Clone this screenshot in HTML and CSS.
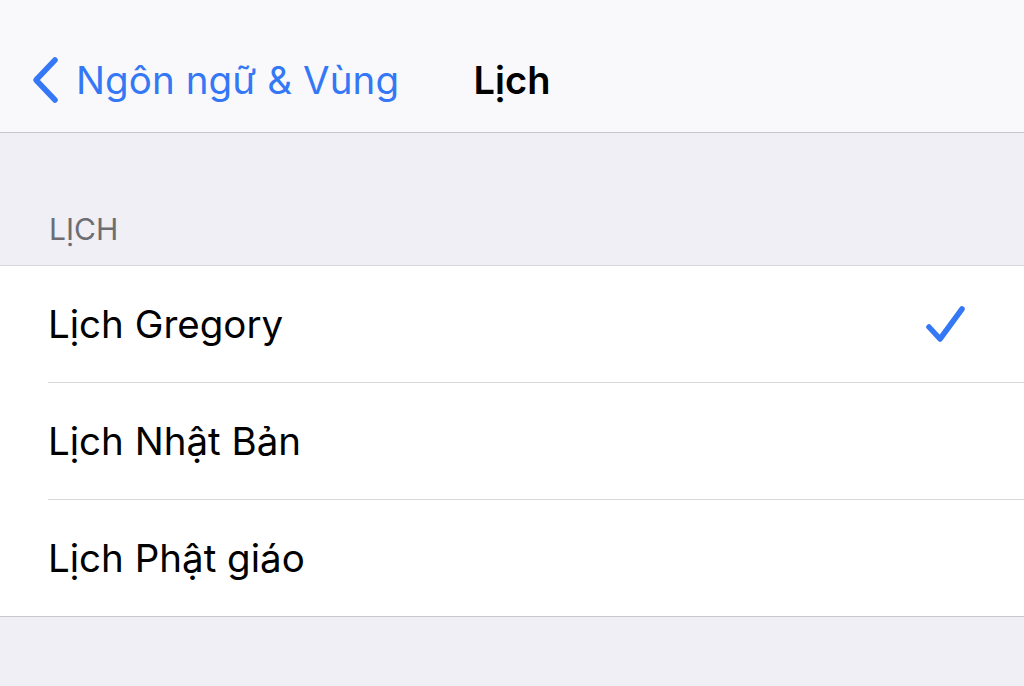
FILE: index.html
```html
<!DOCTYPE html>
<html lang="vi">
<head>
    <meta charset="UTF-8">
    <title>Lịch</title>
    <link rel="stylesheet" href="styles.css">
</head>
<body>
    <!-- Navigation bar -->
    <div class="navbar">
        <a class="back">
            <svg class="chevron" width="28" height="48" viewBox="0 0 28 48">
                <path d="M24 4 L5 24 L24 44" fill="none" stroke="#3478f6" stroke-width="5.5" stroke-linecap="round" stroke-linejoin="round"/>
            </svg>
            <span>Ngôn ngữ &amp; Vùng</span>
        </a>
        <div class="title">Lịch</div>
        <div></div>
    </div>

    <!-- Calendar group -->
    <div class="group-header">LỊCH</div>
    <div class="group">
        <div class="row">
            <div class="row-inner">
                <span>Lịch Gregory</span>
                <svg class="check" width="44" height="42" viewBox="0 0 44 42">
                    <path d="M5 24 L16 36 L38 6" fill="none" stroke="#3478f6" stroke-width="5.5" stroke-linecap="round" stroke-linejoin="round"/>
                </svg>
            </div>
        </div>
        <div class="row">
            <div class="row-inner"><span>Lịch Nhật Bản</span></div>
        </div>
        <div class="row">
            <div class="row-inner"><span>Lịch Phật giáo</span></div>
        </div>
    </div>
</body>
</html>
```

FILE: styles.css
```css
body {
    margin: 0;
    font-family: 'Inter', 'Noto Sans', sans-serif;
    background-color: #f0eff5;
    height: 686px;
    overflow: hidden;
}

.navbar {
    height: 133px;
    box-sizing: border-box;
    padding-top: 27px;
    background-color: #f9f9fb;
    border-bottom: 1px solid #c8c7cc;
    display: grid;
    grid-template-columns: 1fr auto 1fr;
    align-items: center;
}

.back {
    display: flex;
    align-items: center;
    gap: 17px;
    padding-left: 31px;
    color: #3478f6;
    font-size: 38.5px;
    letter-spacing: 0.1px;
}

.chevron {
    display: block;
}

.title {
    font-size: 38px;
    font-weight: 600;
    color: #000;
}

.group-header {
    padding: 78px 0 18px 49px;
    font-size: 30px;
    color: #6d6d72;
    border-bottom: 1px solid #d8d8dc;
    line-height: 36px;
}

.group {
    background-color: #fff;
    border-bottom: 1px solid #c8c7cc;
}

.row {
    padding-left: 48px;
}

.row-inner {
    height: 116px;
    display: flex;
    align-items: center;
    justify-content: space-between;
    padding-right: 56px;
    font-size: 38.5px;
    color: #000;
    border-bottom: 1px solid #d8d8dc;
}

.row:last-child .row-inner {
    border-bottom: none;
}

.check {
    display: block;
}
```
